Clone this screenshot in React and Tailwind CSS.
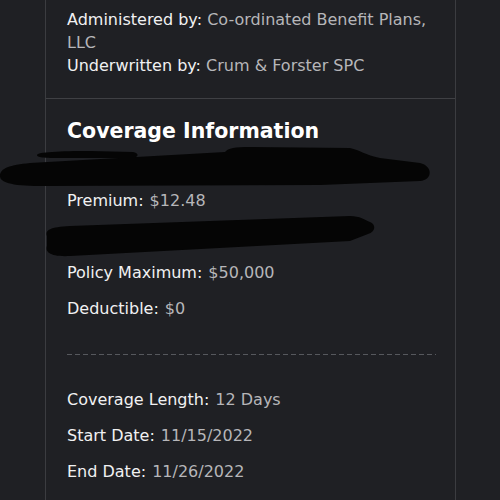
import React from "react";

const rows1 = [
  { label: "Premium:", value: "$12.48" },
  { label: null },
  { label: "Policy Maximum:", value: "$50,000" },
  { label: "Deductible:", value: "$0" },
];

const rows2 = [
  { label: "Coverage Length:", value: "12 Days" },
  { label: "Start Date:", value: "11/15/2022" },
  { label: "End Date:", value: "11/26/2022" },
];

function Row({ label, value }) {
  return (
    <div className="flex h-9 items-center whitespace-nowrap">
      {label && (
        <>
          <span className="text-[#f1f1f2]">{label}</span>
          <span className="ml-[6px] text-[#b6b6b9]">{value}</span>
        </>
      )}
    </div>
  );
}

function Scribbles() {
  return (
    <svg className="pointer-events-none absolute left-0 top-0" width="500" height="500" viewBox="0 0 500 500">
      <g fill="#050505">
        <path d="M0,176 C0,168 10,165 30,163 L225,152 C228,148 235,147 250,147 L350,148 C360,150 365,155 380,158 L420,163 C433,166 433,180 420,181 L320,185 L40,186 C10,186 0,182 0,176 Z" />
        <path d="M37,155 C37,152 60,151 90,151 L133,152 C139,153 139,157 133,158 L60,158 C40,158 37,157 37,155 Z" />
        <path d="M47,236 C45,230 50,227 70,226 L350,216 C360,216 365,220 370,222 C376,224 376,232 368,234 L350,241 L70,256 C50,257 45,252 47,246 Z" />
      </g>
    </svg>
  );
}

export default function App() {
  return (
    <div
      className="relative h-[500px] w-[500px] overflow-hidden bg-[#1f2024] text-[16px]"
      style={{ fontFamily: '"DejaVu Sans", Verdana, sans-serif' }}
    >
      <div className="ml-[45px] h-full w-[411px] border-x border-[#3b3c40]">
        <div className="border-b border-[#3f4044] pb-[21px] pl-[21px] pr-[19px] pt-[8px] leading-[23px]">
          <div>
            <span className="text-[#f1f1f2]">Administered by:</span>{" "}
            <span className="text-[#b6b6b9]">Co-ordinated Benefit Plans, LLC</span>
          </div>
          <div>
            <span className="text-[#f1f1f2]">Underwritten by:</span>{" "}
            <span className="text-[#b6b6b9]">Crum &amp; Forster SPC</span>
          </div>
        </div>
        <div className="pl-[21px] pr-[19px] pt-[16px]">
          <h2 className="flex h-[32px] items-center text-[20.5px] font-bold text-white">
            Coverage Information
          </h2>
          <div className="h-9" />
          {rows1.map((r, i) => (
            <Row key={i} {...r} />
          ))}
          <div className="my-[27px] h-px bg-[repeating-linear-gradient(90deg,#56585d_0_5px,transparent_5px_8px)]" />
          {rows2.map((r, i) => (
            <Row key={i} {...r} />
          ))}
        </div>
      </div>
      <Scribbles />
    </div>
  );
}
